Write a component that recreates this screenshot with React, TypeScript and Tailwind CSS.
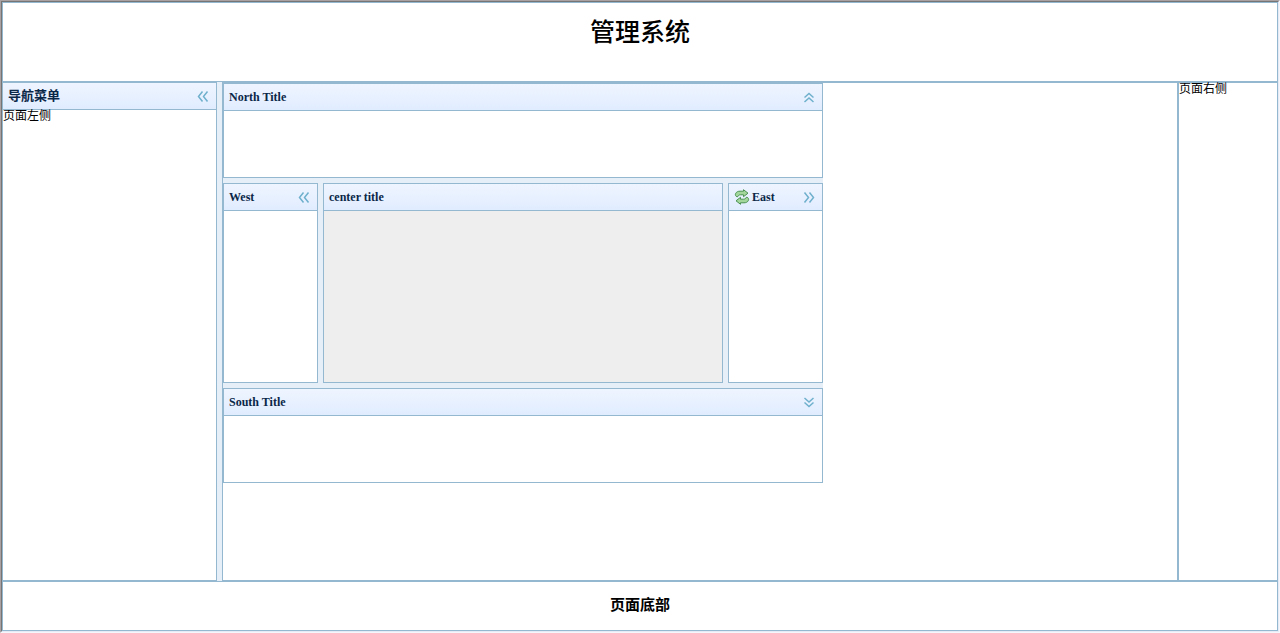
import type { ReactNode } from "react";

type Direction = "left" | "right" | "up" | "down";

const chevrons: Record<Direction, string> = {
  left: "M5.5 1.5 1.5 6.5 5.5 11.5M10.5 1.5 6.5 6.5 10.5 11.5",
  right: "M1.5 1.5 5.5 6.5 1.5 11.5M6.5 1.5 10.5 6.5 6.5 11.5",
  up: "M1.5 6.5 6 2.5 10.5 6.5M1.5 11 6 7 10.5 11",
  down: "M1.5 2 6 6 10.5 2M1.5 6.5 6 10.5 10.5 6.5",
};

function CollapseButton({ direction, label }: { direction: Direction; label: string }) {
  return (
    <button type="button" aria-label={label} className="ml-auto flex h-4 w-4 items-center justify-center">
      <svg width="12" height="13" viewBox="0 0 12 13" fill="none" stroke="#6fb0cc" strokeWidth="1.5" aria-hidden="true">
        <path d={chevrons[direction]} />
      </svg>
    </button>
  );
}

function ReloadIcon() {
  return (
    <svg
      width="16"
      height="16"
      viewBox="0 0 16 16"
      fill="#a3d69b"
      stroke="#4a9152"
      strokeLinejoin="round"
      className="mr-0.5"
      aria-hidden="true"
    >
      <path d="M3.2 8C1.6 7.2 1 6 1.600 4.600 2.400 2.800 4 2.200 6 2.200h3.500V.7L14 4.200 9.500 7.700V5.800H6.500C5 5.800 4.500 6.600 3.200 8Z" />
      <path d="M12.800 8c1.600.8 2.200 2 1.600 3.400-.8 1.800-2.400 2.400-4.400 2.400H6.500v1.500L2 11.800l4.500-3.500v1.900h3c1.500 0 2-.8 3.300-2.200Z" />
    </svg>
  );
}

type PanelProps = {
  title: string;
  direction?: Direction;
  icon?: ReactNode;
  className?: string;
  headerClassName?: string;
  bodyClassName?: string;
  children?: ReactNode;
};

function Panel({
  title,
  direction,
  icon,
  className = "",
  headerClassName = "text-xs",
  bodyClassName = "bg-white",
  children,
}: PanelProps) {
  return (
    <section className={`flex flex-col border border-[#95b8d1] ${className}`}>
      <header className="flex h-[27px] shrink-0 items-center border-b border-[#95b8d1] bg-linear-to-b from-[#eff5ff] to-[#e0ecff] px-[5px]">
        {icon}
        <h2 className={`font-bold whitespace-nowrap text-[#0b2748] ${headerClassName}`}>{title}</h2>
        {direction && <CollapseButton direction={direction} label={`Collapse ${title}`} />}
      </header>
      <div className={`flex-1 ${bodyClassName}`}>{children}</div>
    </section>
  );
}

export default function App() {
  return (
    <div className="flex h-screen min-h-[600px] border border-t-[#aaa2a2] border-r-[#f4f6fb] border-b-[#f4f6fb] border-l-[#aaa2a2] bg-white font-['Liberation_Serif','Noto_Sans_CJK_SC',serif] text-xs text-black">
      <div className="flex min-w-0 flex-1 flex-col border border-t-[#757575] border-r-[#e6eaf4] border-b-[#e6eaf4] border-l-[#757575]">
        <header className="h-20 shrink-0 border border-[#95b8d1] pt-3 text-center">
          <h1 className="text-[25px] leading-9 font-medium">管理系统</h1>
        </header>

        <div className="flex min-h-0 flex-1 bg-[#e6eef8]">
          <Panel
            title="导航菜单"
            direction="left"
            className="w-[215px] shrink-0"
            headerClassName="text-[13px]"
          >
            <p className="leading-3">页面左侧</p>
          </Panel>

          <main className="ml-[5px] min-w-0 flex-1 overflow-auto border border-[#95b8d1] bg-white">
            <div className="flex w-[600px] flex-col gap-[5px] bg-[#e6eef8]">
              <Panel title="North Title" direction="up" className="h-[95px]" />
              <div className="flex h-[200px] gap-[5px]">
                <Panel title="West" direction="left" className="w-[95px]" />
                <Panel title="center title" className="flex-1" bodyClassName="bg-[#eeeeee]" />
                <Panel title="East" direction="right" icon={<ReloadIcon />} className="w-[95px]" />
              </div>
              <Panel title="South Title" direction="down" className="h-[95px]" />
            </div>
          </main>

          <aside className="w-[100px] shrink-0 border border-[#95b8d1] bg-white">
            <p className="leading-3">页面右侧</p>
          </aside>
        </div>

        <footer className="flex h-[50px] shrink-0 items-center justify-center border border-[#95b8d1]">
          <p className="text-[15px] font-bold">页面底部</p>
        </footer>
      </div>
    </div>
  );
}
